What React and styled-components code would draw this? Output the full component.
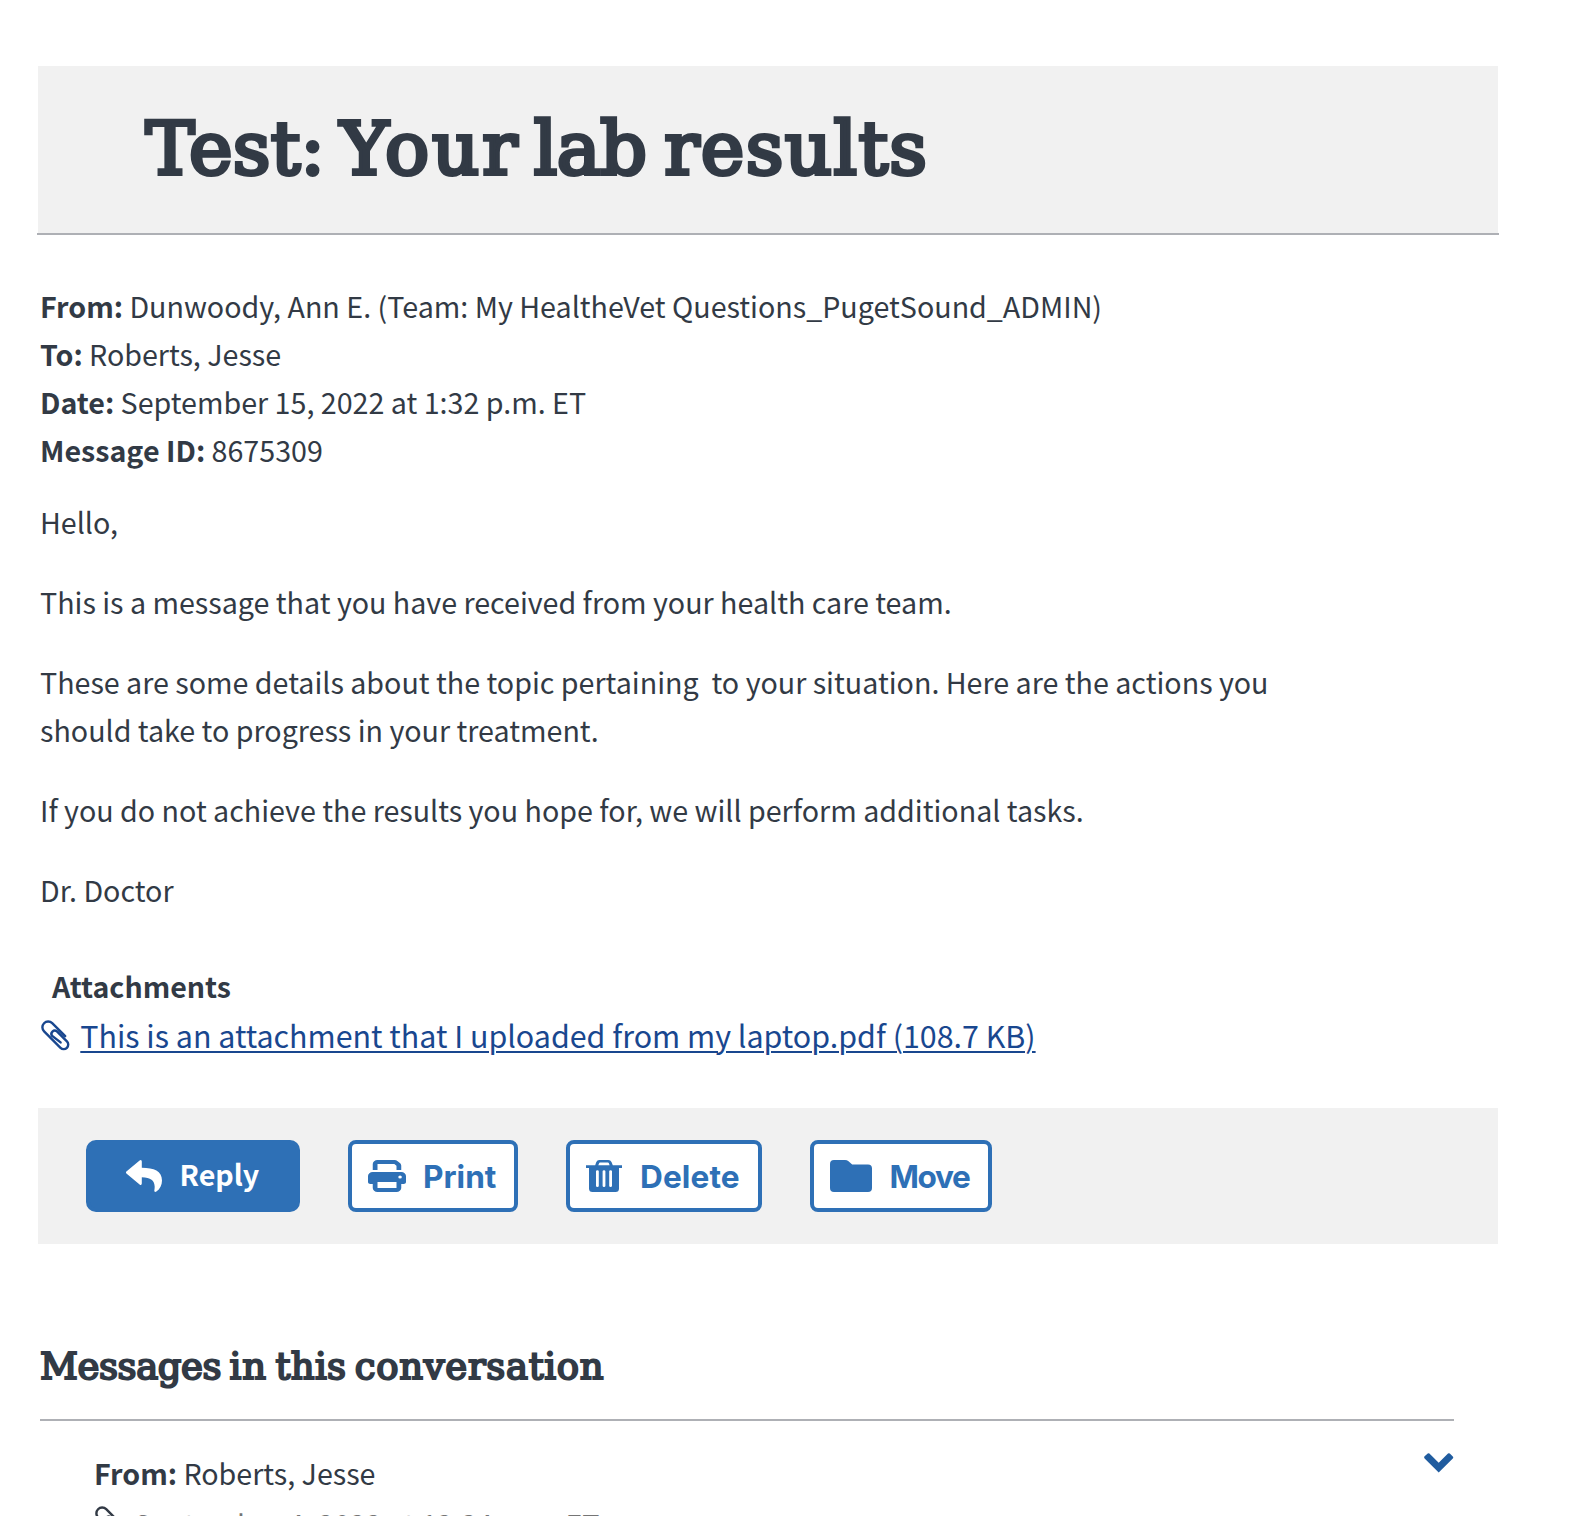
import React from "react";
import styled, { createGlobalStyle, css } from "styled-components";

const ink = "#323a45";
const blue = "#2e70b6";
const linkBlue = "#19478f";

const GlobalStyle = createGlobalStyle`
  * { box-sizing: border-box; }
  html, body { margin: 0; background: #fff; }
  body {
    height: 1516px;
    overflow: hidden;
    color: ${ink};
    font-family: "Noto Sans CJK SC", "Noto Sans", sans-serif;
    font-size: 28.65px;
    line-height: 48px;
  }
`;

const Page = styled.main`
  width: 1578px;
  height: 1516px;
  overflow: hidden;
  padding: 66px 79px 0 37px;
`;

const TitleBar = styled.header`
  border-bottom: 2px solid #aeb0b5;
  padding: 0 1px;
`;

const TitleFill = styled.div`
  height: 167px;
  padding: 33px 0 0 107.5px;
  background: #f1f1f1;
`;

const slab = css`
  margin: 0;
  font-family: "DejaVu Serif", "Liberation Serif", serif;
  font-weight: 400;
  white-space: nowrap;
`;

const Title = styled.h1`
  ${slab}
  font-size: 73.5px;
  line-height: 100px;
  word-spacing: -8px;
  -webkit-text-stroke: 4px ${ink};
`;

const Subtitle = styled.h2`
  ${slab}
  margin-top: 95px;
  font-size: 37px;
  line-height: 56px;
  word-spacing: -3.5px;
  -webkit-text-stroke: 2.1px ${ink};
`;

const Word = styled.span`
  letter-spacing: ${(p) => p.$tracking}px;
  margin-right: ${(p) => p.$after || 0}px;
`;

const Content = styled.section`
  padding: 0 0 0 3px;
`;

const Details = styled.dl`
  margin: 47px 0 24px;
`;

const Detail = styled.div`
  display: flex;
  gap: 6.3px;
  dt { font-weight: 700; }
  dd { margin: 0; }
`;

const Body = styled.div`
  display: flex;
  flex-direction: column;
  gap: 32px;
  max-width: 1290px;
  white-space: pre-wrap;
  p { margin: 0; }
`;

const Attachments = styled.h3`
  margin: 48px 0 0;
  padding-left: 12px;
  font-size: 28.55px;
  font-weight: 700;
  line-height: 48px;
`;

const AttachmentRow = styled.div`
  display: flex;
  align-items: flex-start;
  gap: 9.3px;
  height: 98px;
  color: ${linkBlue};
`;

const AttachmentLink = styled.a`
  color: ${linkBlue};
  font-size: 30.42px;
  line-height: 50px;
  text-decoration: underline;
  text-decoration-thickness: 2px;
  text-underline-offset: 3px;
`;

const ClipSvg = styled.svg`
  flex: none;
  width: 31px;
  height: 34px;
  margin-top: ${(p) => p.$top}px;
`;

const Toolbar = styled.div`
  display: flex;
  gap: 48px;
  height: 136px;
  margin: 0 1px;
  padding: 32px 48px;
  background: #f1f1f1;
`;

const Button = styled.button`
  display: flex;
  align-items: center;
  gap: ${(p) => p.$gap || 17}px;
  width: ${(p) => p.$width}px;
  height: 72px;
  padding: 0 0 0 16px;
  border: 4px solid ${blue};
  border-radius: 8px;
  background: #fff;
  color: ${blue};
  font: 700 31.6px/40px Inter, Roboto, sans-serif;
  letter-spacing: ${(p) => p.$tracking || 0}px;
  svg { flex: none; }
  ${(p) =>
    p.$primary &&
    css`
      padding-left: 36px;
      border-radius: 10px;
      background: ${blue};
      color: #fff;
      font: 700 28.65px/44px "Noto Sans CJK SC", "Noto Sans", sans-serif;
    `}
`;

const Label = styled.span`
  margin-top: ${(p) => (p.$top === undefined ? 2 : p.$top)}px;
`;

const Thread = styled.div`
  display: flex;
  justify-content: space-between;
  width: 1414px;
  margin-top: 24px;
  padding: 28px 0 0 54px;
  border-top: 2px solid #aeb0b5;
`;

const ThreadDate = styled.div`
  display: flex;
  align-items: flex-start;
  gap: 9px;
  height: 48px;
  span {
    margin-top: 3px;
    color: #757575;
  }
`;

const Chevron = styled.svg`
  flex: none;
  width: 30px;
  height: 20px;
  margin-top: 4px;
`;

function Paperclip({ top }) {
  return (
    <ClipSvg $top={top} viewBox="0 0 31 34" fill="none" stroke="currentColor" strokeWidth="2.4" strokeLinecap="round">
      <path d="M25.2 17.2 12.2 4.2A5.75 5.75 0 0 0 4.1 12.4L20.5 28.8A4.5 4.5 0 0 0 26.9 22.4L16.9 12.4A3.3 3.3 0 0 0 12.2 17L20.6 23.4" />
    </ClipSvg>
  );
}

const ReplyIcon = () => (
  <svg width="36" height="32" viewBox="0 0 36 32" fill="currentColor">
    <path d="M.4 11.4 13.6.4Q15.8-.8 15.8 1.6V7.8C28 8 36 11 36 20.5 36 25 34 29 30.4 31.6 28.9 32.4 28 31.8 28.4 30 29.8 21.5 26 17.4 15.8 17.2V23.6Q15.6 25.8 13.6 24.4L.4 13.4Q-.5 12.4.4 11.4Z" />
  </svg>
);

const PrintIcon = () => (
  <svg width="38" height="32" viewBox="0 0 512 512" preserveAspectRatio="none" fill="currentColor">
    <path d="M128 0C92.7 0 64 28.7 64 64v96h64V64H354.7L384 93.3V160h64V93.3c0-17-6.7-33.3-18.7-45.3L400 18.7C388 6.7 371.7 0 354.7 0H128zM384 352v32 64H128V384 368 352H384zm64 32h32c17.7 0 32-14.3 32-32V256c0-35.3-28.7-64-64-64H64c-35.3 0-64 28.7-64 64v96c0 17.7 14.3 32 32 32H64v64c0 35.3 28.7 64 64 64H384c35.3 0 64-28.7 64-64V384zM432 248a24 24 0 1 1 0 48 24 24 0 1 1 0-48z" />
  </svg>
);

const TrashIcon = () => (
  <svg width="36" height="32" viewBox="0 0 36 32" fill="currentColor">
    <path fillRule="evenodd" d="M0 5.2H9.2L10.3 2Q11.2 0 13.3 0H22.4Q24.5 0 25.5 2L26.8 5.2H36V8H33V28.5Q33 32 29.5 32H6.5Q3 32 3 28.5V8H0ZM12.3 5.2H23.6L22.8 3Q22.6 2.4 21.9 2.4H14Q13.4 2.4 13.2 3ZM10 11.3V25.8Q10 27 11.4 27T12.8 25.8V11.3Q12.8 10.2 11.4 10.2T10 11.3ZM16.6 11.3V25.8Q16.6 27 18 27T19.4 25.8V11.3Q19.4 10.2 18 10.2T16.6 11.3ZM23.2 11.3V25.8Q23.2 27 24.6 27T26 25.8V11.3Q26 10.2 24.6 10.2T23.2 11.3Z" />
  </svg>
);

const FolderIcon = () => (
  <svg width="42" height="32" viewBox="0 0 42 32" fill="currentColor">
    <path d="M4 0H15Q17 0 18.5 1.2L22.2 4.6H38Q42 4.6 42 8.6V28Q42 32 38 32H4Q0 32 0 28V4Q0 0 4 0Z" />
  </svg>
);

const details = [
  ["From:", "Dunwoody, Ann E. (Team: My HealtheVet Questions_PugetSound_ADMIN)"],
  ["To:", "Roberts, Jesse"],
  ["Date:", "September 15, 2022 at 1:32 p.m. ET"],
  ["Message ID:", "8675309"],
];

const paragraphs = [
  "Hello,",
  "This is a message that you have received from your health care team.",
  "These are some details about the topic pertaining  to your situation. Here are the actions you should take to progress in your treatment.",
  "If you do not achieve the results you hope for, we will perform additional tasks.",
  "Dr. Doctor",
];

export default function App() {
  return (
    <Page>
      <GlobalStyle />
      <TitleBar>
        <TitleFill>
          <Title>
            <Word $tracking={0.2} $after={-0.8}>Test:</Word>{" "}
            <Word $tracking={2.9} $after={-2}>Your</Word>{" "}
            <Word $tracking={-0.6} $after={2.5}>lab</Word>{" "}
            <Word $tracking={1.4}>results</Word>
          </Title>
        </TitleFill>
      </TitleBar>
      <Content>
        <Details>
          {details.map(([term, value]) => (
            <Detail key={term}>
              <dt>{term}</dt>
              <dd>{value}</dd>
            </Detail>
          ))}
        </Details>
        <Body>
          {paragraphs.map((text) => (
            <p key={text}>{text}</p>
          ))}
        </Body>
        <Attachments>Attachments</Attachments>
        <AttachmentRow>
          <Paperclip top={8.5} />
          <AttachmentLink href="#">
            This is an attachment that I uploaded from my laptop.pdf (108.7 KB)
          </AttachmentLink>
        </AttachmentRow>
      </Content>
      <Toolbar>
        <Button $primary $width={214} $gap={17.5}>
          <ReplyIcon />
          <Label $top={-4}>Reply</Label>
        </Button>
        <Button $width={170}>
          <PrintIcon />
          <Label>Print</Label>
        </Button>
        <Button $width={196} $gap={18} $tracking={0.1}>
          <TrashIcon />
          <Label>Delete</Label>
        </Button>
        <Button $width={182} $gap={17.5} $tracking={-1.4}>
          <FolderIcon />
          <Label>Move</Label>
        </Button>
      </Toolbar>
      <Content>
        <Subtitle>
          <Word $tracking={-0.4}>Messages</Word> <Word $tracking={1}>in</Word>{" "}
          <Word $tracking={0.4}>this</Word> <Word $tracking={0.7}>conversation</Word>
        </Subtitle>
        <Thread>
          <div>
            <Detail as="div">
              <b>From:</b>
              <span>Roberts, Jesse</span>
            </Detail>
            <ThreadDate>
              <Paperclip top={7.5} />
              <span>September 4, 2022 at 12:34 p.m. ET</span>
            </ThreadDate>
          </div>
          <Chevron viewBox="0 0 30 20" fill="#205c9f">
            <path d="M.6 5.4Q-.4 4.3.6 3.3L3.7.6Q4.5-.2 5.4.6L14.7 9.8 24 .6Q24.9-.2 25.8.6L28.8 3.4Q29.7 4.4 28.8 5.4L14.7 19.4Z" />
          </Chevron>
        </Thread>
      </Content>
    </Page>
  );
}
